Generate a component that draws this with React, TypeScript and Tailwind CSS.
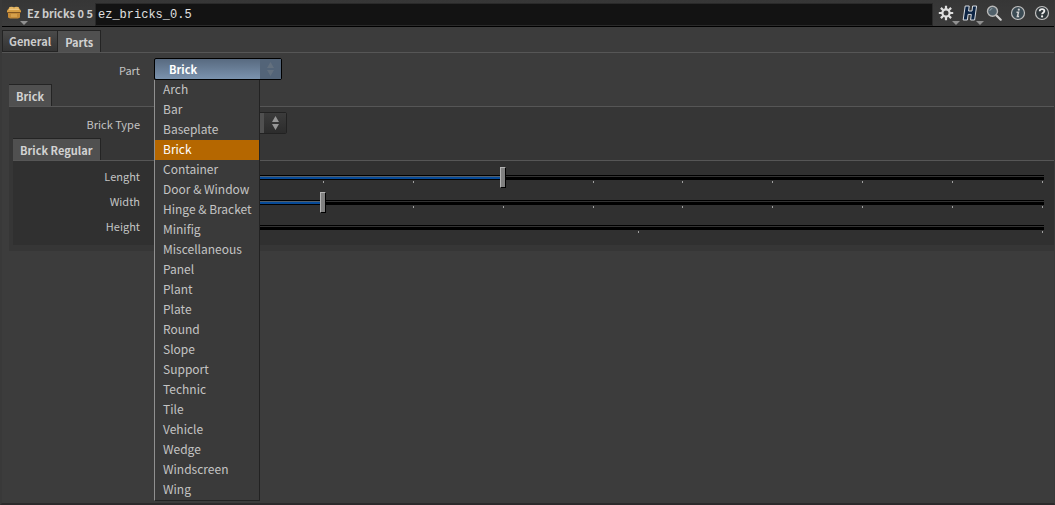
import React, { useState } from "react";

const parts = [
  "Arch", "Bar", "Baseplate", "Brick", "Container", "Door & Window", "Hinge & Bracket",
  "Minifig", "Miscellaneous", "Panel", "Plant", "Plate", "Round", "Slope", "Support",
  "Technic", "Tile", "Vehicle", "Wedge", "Windscreen", "Wing",
];

const iconButton = "relative flex h-5 w-5 shrink-0 items-center justify-center";

function Caret() {
  return (
    <svg className="absolute -right-1 -bottom-0.5" width="8" height="4" viewBox="0 0 8 4">
      <path d="M0 0h8L4 4z" fill="#909090" />
    </svg>
  );
}

function BrickIcon() {
  return (
    <svg width="16" height="14" viewBox="0 0 16 14">
      <path d="M1 4.5 3.5 1.5h9L15 4.5v2H1z" fill="#d8a046" />
      <ellipse cx="5.5" cy="2" rx="2.5" ry="1.3" fill="#e5b765" />
      <ellipse cx="10.5" cy="2" rx="2.5" ry="1.3" fill="#e5b765" />
      <path d="M3 3.500h10" stroke="#edc681" strokeWidth="1" />
      <path d="M2 7h12v4.500l-2 1H4l-2-1z" fill="#c48a38" />
      <path d="M1 6.500h14" stroke="#805420" strokeWidth="1" />
      <path d="M5 8h6v3H5z" fill="#d6a04b" />
    </svg>
  );
}

function GearIcon() {
  return (
    <svg width="16" height="16" viewBox="0 0 16 16">
      <path
        d="M8 .8v3.400M8 11.800v3.400M.8 8h3.400M11.800 8h3.400M2.900 2.900l2.400 2.400M10.700 10.700l2.400 2.400M13.100 2.900l-2.400 2.400M5.300 10.700l-2.400 2.400"
        stroke="#dedede" strokeWidth="2.200"
      />
      <circle cx="8" cy="8" r="3.600" fill="#3a3a3a" stroke="#dedede" strokeWidth="2.200" />
    </svg>
  );
}

function HoudiniIcon() {
  return (
    <svg width="16" height="16" viewBox="0 0 16 16">
      <path
        d="M3.200 1h4L6.600 6h3.400l.6-5h4l-2 14H8.600l.7-5.600H6.100L5.400 15H1.200z"
        fill="#0c2444" stroke="#d9dde2" strokeWidth="1" strokeLinejoin="round"
      />
    </svg>
  );
}

function SearchIcon() {
  return (
    <svg width="16" height="16" viewBox="0 0 16 16">
      <path d="m10 10 4.700 4.700" stroke="#d2d2d2" strokeWidth="2.200" strokeLinecap="round" />
      <circle cx="6.500" cy="6.300" r="5" fill="#50606a" stroke="#b8b8b8" strokeWidth="1.400" />
      <path d="M3.800 5.800a3 3 0 0 1 2.500-2.300" stroke="#93a1a8" fill="none" />
    </svg>
  );
}

function InfoIcon() {
  return (
    <svg width="16" height="16" viewBox="0 0 16 16">
      <circle cx="8" cy="8" r="6.500" fill="#3b4b54" stroke="#c0c0c0" strokeWidth="1.200" />
      <circle cx="8.800" cy="4.700" r="1.100" fill="#d0d0d0" />
      <path d="M6.500 7.200h2L7.400 11.500h1.700" stroke="#d0d0d0" strokeWidth="1.500" fill="none" />
    </svg>
  );
}

function HelpIcon() {
  return (
    <svg width="16" height="16" viewBox="0 0 16 16">
      <circle cx="8" cy="8" r="6.500" fill="#30383c" stroke="#c0c0c0" strokeWidth="1.200" />
      <path d="M5.700 6.300c0-3 4.700-2.800 4.700-.2 0 1.500-2.300 1.600-2.300 3.100" stroke="#f0f0f0" strokeWidth="1.800" fill="none" />
      <circle cx="8.100" cy="11.400" r="1.100" fill="#f0f0f0" />
    </svg>
  );
}

function Arrows({ color }: { color: string }) {
  return (
    <svg width="7" height="14" viewBox="0 0 7 14">
      <path d="M3.500 0 7 6H0zM0 8h7l-3.500 6z" fill={color} />
    </svg>
  );
}

function Tab({ label, active = true }: { label: string; active?: boolean }) {
  return (
    <button
      role="tab"
      aria-selected={active}
      className={`h-[22px] border-t border-r border-[#242424] text-[11px] leading-5 font-bold ${
        active ? "bg-[#505050] px-[7px] text-[#d2d2d2]" : "border-b border-l bg-linear-to-b from-[#4a4a4a] to-[#343434] px-1.5 text-[#cccccc]"
      }`}
    >
      {label}
    </button>
  );
}

const labelClass = "shrink-0 text-right text-[11px] leading-5 text-[#c4c4c4]";

function SliderRow({ label, max, initial }: { label: string; max: number; initial: number }) {
  const [value, setValue] = useState(initial);
  const id = `slider-${label}`;
  const filled = ((value - 1) / (max - 1)) * 100;
  return (
    <div className="flex h-[25px] pr-2.5">
      <label htmlFor={id} className={`w-[140px] pt-px ${labelClass}`}>{label}</label>
      <div className="relative ml-[93px] h-[25px] grow pt-[10px]">
        <div className="h-[5px] border-y border-black bg-black">
          <div className="h-px bg-[#333333]" />
          <div className="-mt-px h-[3px] border-t border-[#53606c] bg-[#064a98]" style={{ width: `${filled}%`, visibility: filled ? "visible" : "hidden" }} />
        </div>
        <div className="mt-px flex justify-between pr-px">
          {Array.from({ length: max }, (_, i) => (
            <span key={i} className="h-0.5 w-px bg-[#a0a0a0]" />
          ))}
        </div>
        <input
          id={id}
          type="range"
          min={1}
          max={max}
          value={value}
          onChange={(e) => setValue(Number(e.target.value))}
          className="absolute inset-y-0 -inset-x-[3px] m-0 h-6 w-[calc(100%+6px)] appearance-none bg-transparent [&::-webkit-slider-thumb]:h-[21px] [&::-webkit-slider-thumb]:w-[6px] [&::-webkit-slider-thumb]:appearance-none [&::-webkit-slider-thumb]:rounded-none [&::-webkit-slider-thumb]:border [&::-webkit-slider-thumb]:border-[#b4b4b4] [&::-webkit-slider-thumb]:border-r-black [&::-webkit-slider-thumb]:border-b-black [&::-webkit-slider-thumb]:bg-[#808080]"
        />
      </div>
    </div>
  );
}

export default function App() {
  const [part, setPart] = useState("Brick");
  return (
    <div className="flex min-h-screen flex-col border-r border-b-2 border-l-2 border-x-[#393939] border-b-[#2c2a2b] bg-[#3c3c3c] font-['Noto_Sans_CJK_SC','Noto_Sans',sans-serif] text-[12px]">
      <header className="flex h-[27px] items-center border-b border-black bg-linear-to-b from-[#363636] to-[#3c3c3c] pr-0.5">
        <button aria-label="Node type" className="relative ml-0.5 flex h-5 w-5 shrink-0 items-center justify-center">
          <BrickIcon />
          <Caret />
        </button>
        <label htmlFor="node-name" className="ml-[3px] w-[68px] shrink-0 text-[11px] leading-5 font-bold whitespace-nowrap text-[#cccccc]">
          Ez bricks 0 5
        </label>
        <input
          id="node-name"
          defaultValue="ez_bricks_0.5"
          className="mt-[3px] h-[23px] min-w-0 grow border border-[#2a2a2a] bg-[#131313] px-0.5 font-['Liberation_Mono',monospace] text-[12px] leading-5 text-[#e0e0e0]"
        />
        <div className="ml-[3px] flex items-center gap-1">
          <button aria-label="Settings" className={iconButton}><GearIcon /><Caret /></button>
          <button aria-label="Houdini" className={iconButton}><HoudiniIcon /><Caret /></button>
          <button aria-label="Search" className={iconButton}><SearchIcon /></button>
          <button aria-label="Info" className={iconButton}><InfoIcon /></button>
          <button aria-label="Help" className={iconButton}><HelpIcon /></button>
        </div>
      </header>

      <main className="grow">
        <div role="tablist" className="flex border-b border-[#565656] pt-[3px]">
          <Tab label="General" active={false} />
          <Tab label="Parts" />
        </div>

        <div className="flex h-[31px] pt-[5px]">
          <label htmlFor="part" className={`w-[138px] pt-0.5 ${labelClass}`}>Part</label>
          <div className="relative ml-3.5 h-[22px] w-32">
            <select
              id="part"
              value={part}
              onChange={(e) => setPart(e.target.value)}
              className="h-full w-full appearance-none rounded-[2px] border border-black bg-linear-to-b from-[#586a80] to-[#7b93ae] pl-3.5 text-[11px] font-bold text-white"
            >
              {parts.map((p) => <option key={p}>{p}</option>)}
            </select>
            <div className="pointer-events-none absolute inset-y-px right-px flex w-[21px] items-center justify-center bg-[#536478]">
              <Arrows color="#63707e" />
            </div>
            <ul role="listbox" aria-label="Part" className="absolute top-[22px] left-0 z-10 w-[106px] border-r border-b border-l border-r-[#222222] border-b-[#222222] border-l-[#909090] bg-[#3a3a3a]">
              {parts.map((p) => (
                <li
                  key={p}
                  role="option"
                  aria-selected={p === part}
                  onClick={() => setPart(p)}
                  className={`h-5 pl-2 text-[12px] leading-[18px] whitespace-nowrap ${p === part ? "bg-[#b56700] text-white" : "text-[#c4c4c4]"}`}
                >
                  {p}
                </li>
              ))}
            </ul>
          </div>
        </div>

        <section className="ml-[7px] bg-[#363636] pb-1.5">
          <div role="tablist" className="flex border-b border-[#565656] bg-[#3c3c3c]">
            <Tab label="Brick" />
          </div>
          <div className="flex h-[31px] pt-[5px]">
            <label htmlFor="brick-type" className={`w-[131px] pt-0.5 ${labelClass}`}>Brick Type</label>
            <div className="relative ml-3.5 h-[22px] w-[133px]">
              <select id="brick-type" className="h-full w-full appearance-none rounded-[2px] border border-[#222222] bg-[#505050] pl-3.5 text-[11px] font-bold text-[#cccccc]">
                <option>Regular</option>
              </select>
              <div className="pointer-events-none absolute inset-y-px right-px flex w-[22px] items-center justify-center bg-linear-to-b from-[#3c3c3c] to-[#2c2c2c]">
                <Arrows color="#969696" />
              </div>
            </div>
          </div>
          <div className="ml-1 bg-[#303030] pb-[5px]">
            <div role="tablist" className="flex border-b border-[#565656] bg-[#363636]">
              <Tab label="Brick Regular" />
            </div>
            <div className="-ml-[13px] pt-1">
              <SliderRow label="Lenght" max={10} initial={4} />
              <SliderRow label="Width" max={10} initial={2} />
              <SliderRow label="Height" max={3} initial={1} />
            </div>
          </div>
        </section>
      </main>
    </div>
  );
}
